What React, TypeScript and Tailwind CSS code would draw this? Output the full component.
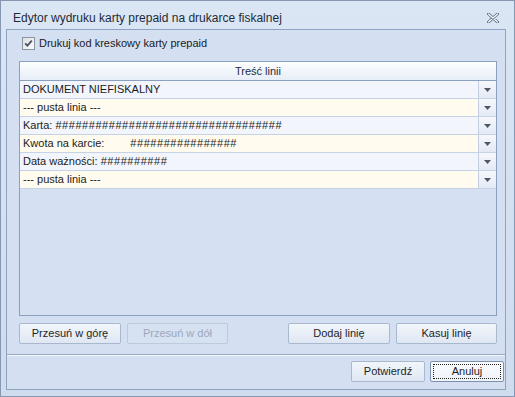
import React from 'react'

type Row = { text: React.ReactNode; cream: boolean }

const hashes = (n: number) => '#'.repeat(n)

function Arrow() {
  return (
    <svg width="7" height="4" viewBox="0 0 7 4">
      <polygon points="0,0 7,0 3.5,4" fill="#4d5866" />
    </svg>
  )
}

function Btn({ label, disabled, focused, w }: { label: string; disabled?: boolean; focused?: boolean; w: string }) {
  if (disabled) {
    return (
      <div className={`${w} h-[21px] rounded-[2px] border border-[#bccadd] bg-[#d6e1f1] text-[#9aa8bb] flex items-center justify-center`}>
        {label}
      </div>
    )
  }
  return (
    <div
      className={`${w} h-[21px] rounded-[2px] border ${focused ? 'border-[#7d90ae] bg-gradient-to-b from-[#fbfcfe] to-[#eef3fa]' : 'border-[#a8b8cf] bg-gradient-to-b from-[#f2f6fb] to-[#dfe7f3]'} text-[#1e1e1e] flex items-center justify-center p-[2px]`}
    >
      <div className={`w-full h-full flex items-center justify-center ${focused ? 'border border-dotted border-[#222]' : ''}`}>
        {label}
      </div>
    </div>
  )
}

export default function App() {
  const rows: Row[] = [
    { text: 'DOKUMENT NIEFISKALNY', cream: false },
    { text: '--- pusta linia ---', cream: true },
    {
      text: (
        <span>
          Karta: <span className="tracking-[0.55px]">{hashes(34)}</span>
        </span>
      ),
      cream: false,
    },
    {
      text: (
        <span>
          Kwota na karcie:<span className="ml-[26px] tracking-[0.55px]">{hashes(16)}</span>
        </span>
      ),
      cream: true,
    },
    {
      text: (
        <span>
          Data ważności: <span className="tracking-[0.55px]">{hashes(10)}</span>
        </span>
      ),
      cream: false,
    },
    { text: '--- pusta linia ---', cream: true },
  ]

  return (
    <div className="w-[515px] h-[397px] border border-[#8797b2] bg-gradient-to-b from-[#dbe6f4] to-[#cfdcee] flex flex-col font-['Liberation_Sans',Arial,sans-serif] text-[11px] text-[#1b1b1b] overflow-hidden">
      {/* title bar */}
      <div className="h-[28px] shrink-0 flex items-center pt-[6px] pl-[12px] pr-[15px]">
        <span className="text-[12px] text-[#1f2a3a]">Edytor wydruku karty prepaid na drukarce fiskalnej</span>
        <svg className="ml-auto" width="12" height="10" viewBox="0 0 12 10">
          <path d="M1.5 1 L10.5 9 M10.5 1 L1.5 9" stroke="#66758c" strokeWidth="3" strokeLinecap="round" />
          <path d="M1.5 1 L10.5 9 M10.5 1 L1.5 9" stroke="#ffffff" strokeWidth="1.1" strokeLinecap="round" />
        </svg>
      </div>

      {/* panel */}
      <div className="ml-[5px] mr-[8px] mb-[6px] flex-1 border border-[#8ea2c2] bg-[#d4e0f2] flex flex-col">
        <div className="flex-1 pl-[12px] pr-[8px] pt-[7px] flex flex-col">
          <label className="flex items-center gap-[4px] h-[13px]">
            <span className="w-[13px] h-[13px] ml-[3px] border border-[#8c96a3] bg-gradient-to-br from-[#dcdfe4] to-[#fbfbfc] flex items-center justify-center">
              <svg width="9" height="9" viewBox="0 0 9 9">
                <path d="M1.2 4.3 L3.4 6.6 L7.8 1.6" stroke="#4a5666" strokeWidth="1.8" fill="none" />
              </svg>
            </span>
            <span>Drukuj kod kreskowy karty prepaid</span>
          </label>

          {/* grid */}
          <div className="mt-[11px] h-[255px] border border-[#8b9fbf] bg-[#d5e1f2] flex flex-col">
            <div className="h-[19px] shrink-0 border-b border-[#8b9fbf] bg-gradient-to-b from-[#fdfefe] to-[#e7eef8] flex items-center justify-center text-[#1e2a3c]">
              Treść linii
            </div>
            {rows.map((r, i) => (
              <div
                key={i}
                className={`h-[18px] shrink-0 border-b border-[#c6d3e6] flex ${r.cream ? 'bg-[#fffcef]' : 'bg-[#f2f6fc]'}`}
              >
                <div className="flex-1 flex items-center pl-[3px] whitespace-pre overflow-hidden">{r.text}</div>
                <div className="w-[18px] border-l border-[#c3cfe1] bg-gradient-to-b from-[#f6f8fc] to-[#e3eaf5] flex items-center justify-center">
                  <Arrow />
                </div>
              </div>
            ))}
          </div>

          <div className="mt-[7px] flex items-center">
            <Btn label="Przesuń w górę" w="w-[102px]" />
            <div className="ml-[6px]">
              <Btn label="Przesuń w dół" w="w-[101px]" disabled />
            </div>
            <div className="ml-auto flex gap-[6px]">
              <Btn label="Dodaj linię" w="w-[102px]" />
              <Btn label="Kasuj linię" w="w-[101px]" />
            </div>
          </div>
        </div>

        {/* footer */}
        <div className="h-[35px] shrink-0 mt-[9px] border-t border-[#98aac6] shadow-[inset_0_1px_0_#f4f8fd] flex items-center justify-end gap-[5px] pr-[1px] pb-[1px]">
          <Btn label="Potwierdź" w="w-[74px]" />
          <Btn label="Anuluj" w="w-[74px]" focused />
        </div>
      </div>
    </div>
  )
}
